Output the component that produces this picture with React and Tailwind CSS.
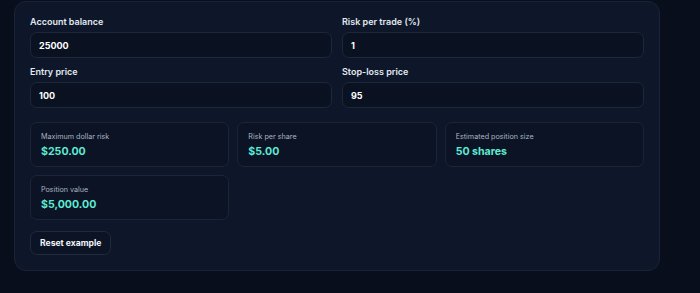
import React, { useState } from 'react';

const Field = ({ label, value, onChange }) => (
  <label className="flex flex-col gap-[4px]">
    <span className="text-[9px] font-semibold leading-[12px] text-slate-200">{label}</span>
    <input
      value={value}
      onChange={(e) => onChange(e.target.value)}
      className="h-[26px] rounded-[7px] border border-[#1c273a] bg-[#0a1121] px-[8px] text-[9px] font-bold text-white outline-none"
    />
  </label>
);

const Stat = ({ label, value }) => (
  <div className="flex h-[45px] flex-col justify-center gap-[4px] rounded-[7px] border border-[#1a2538] bg-[#0b1324] px-[10px]">
    <span className="text-[7.2px] leading-[9px] text-[#aab4c3]">{label}</span>
    <span className="text-[10.6px] font-bold leading-[13px] text-[#5eead4]">{value}</span>
  </div>
);

const fmt = (n) =>
  '$' + n.toLocaleString('en-US', { minimumFractionDigits: 2, maximumFractionDigits: 2 });

export default function App() {
  const [balance, setBalance] = useState('25000');
  const [risk, setRisk] = useState('1');
  const [entry, setEntry] = useState('100');
  const [stop, setStop] = useState('95');

  const maxRisk = (Number(balance) * Number(risk)) / 100;
  const perShare = Math.abs(Number(entry) - Number(stop));
  const shares = perShare > 0 ? Math.floor(maxRisk / perShare) : 0;
  const posValue = shares * Number(entry);

  const reset = () => {
    setBalance('25000');
    setRisk('1');
    setEntry('100');
    setStop('95');
  };

  return (
    <div className="min-h-[293px] bg-[#080e1b] px-[14px] pt-px font-['Inter',sans-serif]">
      <div className="w-[646px] rounded-[12px] border border-[#1a2436] bg-[#0e1729] px-[15px] pb-[15px] pt-[14px]">
        <div className="grid grid-cols-2 gap-x-[10px] gap-y-[8px]">
          <Field label="Account balance" value={balance} onChange={setBalance} />
          <Field label="Risk per trade (%)" value={risk} onChange={setRisk} />
          <Field label="Entry price" value={entry} onChange={setEntry} />
          <Field label="Stop-loss price" value={stop} onChange={setStop} />
        </div>
        <div className="mt-[14px] grid grid-cols-3 gap-[8px]">
          <Stat label="Maximum dollar risk" value={fmt(maxRisk)} />
          <Stat label="Risk per share" value={fmt(perShare)} />
          <Stat label="Estimated position size" value={`${shares} shares`} />
          <Stat label="Position value" value={fmt(posValue)} />
        </div>
        <button
          onClick={reset}
          className="mt-[11px] h-[24px] rounded-[7px] border border-[#1f2a3d] bg-[#0b1324] px-[9px] text-[8.6px] font-bold text-slate-100"
        >
          Reset example
        </button>
      </div>
    </div>
  );
}
